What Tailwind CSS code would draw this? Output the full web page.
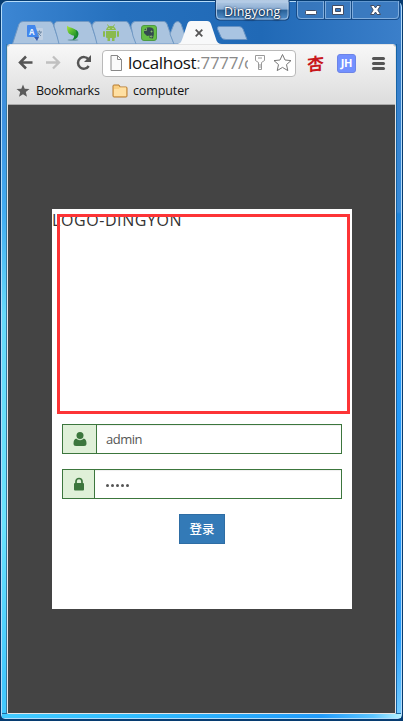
<!DOCTYPE html>
<html lang="zh">
<head>
<meta charset="utf-8">
<title>Login</title>
<script src="https://cdn.jsdelivr.net/npm/@tailwindcss/browser@4"></script>
</head>
<body class="h-[721px] w-[403px] overflow-hidden bg-[#063b70] font-['Open_Sans','Noto_Sans_CJK_SC',sans-serif]">
<div class="flex h-[719px] w-full px-px pt-px">
<div class="relative flex w-full flex-col rounded-t-md rounded-b border border-[#b5dcfa] bg-[linear-gradient(90deg,#3c86d3_0%,#2570bd_30%,#2069b6_65%,#3b7fca_100%)]">
  <div class="absolute top-[42px] bottom-0 left-0 w-[5px] bg-[linear-gradient(180deg,#3c85d3_0px,#3e93e1_80px,#42adf2_170px,#65dafa_270px,#69e3fc_480px,#42c8fc_640px)] border-r border-[#367ba5]"></div>
  <div class="absolute top-[42px] right-0 bottom-0 w-[5px] border-l border-[#1564a7] bg-[linear-gradient(180deg,#377cc7_0px,#378bd9_168px,#1e83d9_170px,#259bfa_260px,#2499fb_500px,#3097ef_540px,#229cff_590px,#78ceff_674px)]"></div>
  <div class="absolute right-0 bottom-0 left-0 h-[5px] border-t border-[#21699e] bg-[linear-gradient(90deg,#43cbff,#32bfff_30%,#229cfb_80%,#5cc5ff_93%,#b7f3ff)]"></div>

  <header class="relative h-[42px] shrink-0">
    <svg class="absolute -left-[2px] -top-[2px]" width="403" height="44" viewBox="0 0 403 44">
      <defs>
        <linearGradient id="cap" x2="0" y2="1"><stop offset="0" stop-color="#b6cce4"/><stop offset=".46" stop-color="#8caed4"/><stop offset=".5" stop-color="#286097"/><stop offset="1" stop-color="#5693cf"/></linearGradient>
        <linearGradient id="leaf" x2="1" y2="1"><stop stop-color="#b2e43d"/><stop offset=".5" stop-color="#53b92f"/><stop offset="1" stop-color="#16892b"/></linearGradient>
      </defs>
      <g fill="#abc4df" stroke="#7199c4">
        <path d="M12.500 44 L19 24Q20 21.500 23 21.500H50Q52 21.500 53 24L60 44Z"/>
        <path d="M57 36 54 26Q54 21.500 58 21.500H88Q90 21.500 91 24L98 44H59Z"/>
        <path d="M95 36 92 26Q93 21.500 96 21.500H126Q128 21.500 129 24L137 44H97Z"/>
        <path d="M133 36 131 26Q132 21.500 135 21.500H164Q166 21.500 167 24L174 44H136Z"/>
        <path d="M170 34 174 24Q175 21.500 178 21.500 180 22 181 24L188 44H174Z"/>
      </g>
      <path d="M176 44C181 44 181 42 183 37L187 25Q188 21 191 21H207Q210 21 211 24L216 39Q217 44 222 44Z" fill="#f8f9fa"/>
      <path d="M219 26.500H239Q242 26.500 243 29L247 39.500H226Q222 39.500 221 37L217.500 29Q217 26.500 219 26.500Z" fill="#a9c4e2" stroke="#6591c3"/>
      <path d="m195.700 29.700 6.600 6.600m0-6.600-6.600 6.600" stroke="#555" stroke-width="1.800"/>
      <rect x="34" y="28" width="9" height="12" rx="1" fill="#c0d0e3"/>
      <path d="M28 25h7l4 12H28q-1 0-1-1V26q0-1 1-1z" fill="#4287ed"/><path d="m34 37 5 0-2 4z" fill="#3b5eb0"/>
      <path d="M37 32h5m-2.500-1.500v1.500m1.500 0q-1 3-4 4m1-3 3 3" fill="none" stroke="#708aa6"/>
      <text x="29" y="35" font-size="8" font-weight="700" fill="#e9f2ff" font-family="Open Sans">A</text>
      <ellipse cx="73" cy="40" rx="5.500" ry=".8" fill="#6c95a3"/>
      <path d="M72 30C76 28 80 32 78 36Q77 39 72.500 40 75 37 74 34Z" fill="#16862d"/><path d="M67 25.500C69 28 72 27 75 29.500 77.500 32 75 34 78 36 73 36 69 34.500 68 32 67 30 67 28 67 25.500Z" fill="url(#leaf)"/>
      <g fill="#8aba4e"><path d="M106 30q1-4 5-4t5 4zM106 31h10v6q0 1-1 1h-8q-1 0-1-1z"/><rect x="103" y="31" width="2" height="6" rx="1"/><rect x="117" y="31" width="2" height="6" rx="1"/><path d="M107.500 37h2.500v4h-2.500zM112 37h2.500v4H112z"/><path d="m107.500 24.500 1.500 2.500m5.500-2.500-1.500 2.500" stroke="#8aba4e"/></g><circle cx="109" cy="28.500" r=".6" fill="#dce9d0"/><circle cx="113" cy="28.500" r=".6" fill="#dce9d0"/>
      <rect x="141.500" y="25.500" width="15" height="15" rx="2.500" fill="#64bd45" stroke="#4d9b43"/>
      <path d="M144 30 147 27.500Q152 26.500 153.500 29 154.500 34 153 38.500L149.500 38V35.500L147 36 144 33Z" fill="#354b4f"/><path d="M150.500 36h1.500v1h-1.500zM151 31h1v1h-1zM146.500 28v2.500H144" fill="none" stroke="#9ad174" stroke-width=".7"/>
      <path d="M215.500 0V16Q215.500 20 219 20H286Q289 20 289 16V0" fill="url(#cap)" stroke="#173f71"/><path d="M216.500 2V15Q216.500 19 220 19H285Q288 19 288 15V2Z" fill="none" stroke="#bbd3ed" stroke-opacity=".8"/>
      <g fill="#3d7bbe" fill-opacity=".7"><path d="M296.500 1V15Q296.500 19.500 300 19.500H396Q399.500 19.500 399.500 15V1" stroke="#164b88"/><path d="M297.500 1V15Q297.500 18.500 301 18.500H323.500V1M325.500 1V18.500H350.500V1M352.500 1V18.500H395Q398.500 18.500 398.500 15V1" fill="none" stroke="#80addd"/><path d="M324.500 1V19M351.500 1V19" stroke="#174c85"/></g>
      <rect x="305.500" y="10.500" width="11" height="4" rx="1" fill="#fff" stroke="#424d65"/>
      <path d="M332.500 5.500h11v9h-11zM335.500 8.500v3h5v-3z" fill="#fff" stroke="#424d65" fill-rule="evenodd"/>
      <path d="M370.500 5.500H374L375.500 8 377 5.500H380.500L377.800 10 380.500 14.500H377L375.500 12 374 14.500H370.500L373.200 10Z" fill="#fff" stroke="#424d65"/>
    </svg>
    <div class="absolute top-0 left-[222px] text-[12.5px] leading-[19px] font-medium tracking-[.2px] text-white [text-shadow:0_0_2px_#102847,0_1px_2px_#102847] whitespace-nowrap">Dingyong</div>
  </header>

  <main class="relative mx-[5px] flex h-[670px] shrink-0 flex-col overflow-hidden rounded-t-[3px] border border-[#e4e4e4] bg-[#444]">
    <nav class="-mx-px -mt-px h-[61px] shrink-0 border-b border-[#aaa] bg-[linear-gradient(#f8f8f8,#dedede_56px)]">
      <div class="flex h-[38px] items-center pl-[11px]">
        <svg class="shrink-0" width="76" height="20" viewBox="0 0 76 20" fill="none"><path d="M14.500 9.500H2m6-6-6 6 6 6" stroke="#555" stroke-width="2.500"/><path d="M28 9.500h13m-6-6 6 6-6 6" stroke="#c0c0c0" stroke-width="2.300"/><path d="M70.500 6.500A5.800 5.800 0 1 0 70.700 13" stroke="#555" stroke-width="2.500"/><path d="M73 2V9H66Z" fill="#555"/></svg>
        <div class="ml-[8px] flex h-[27px] w-[194px] shrink-0 items-center rounded-sm border border-[#b9b9b9] bg-white pl-[7px]">
          <svg class="shrink-0" width="12" height="16" viewBox="0 0 12 16"><path d="M1 .5h6.500l4 4v11H1zM7.500 .5v4h4" fill="#fafafa" stroke="#888"/></svg>
          <div class="ml-[6px] w-[120px] shrink-0 overflow-hidden text-[17px] leading-6 tracking-[-.32px] whitespace-nowrap text-[#8a8a8a]"><span class="text-[#111]">localhost</span>:7777/c</div>
          <svg class="ml-[5px] shrink-0" width="40" height="20" viewBox="0 0 40 20" fill="#fff" stroke="#9a9a9a"><path d="M2.500 2.500h9v5l-3 2v7h-3v-7l-3-2zM5 5h4M6 12h2m-2 2h2"/><path d="m29.500 1.500 2.500 5.500 6 .6-4.500 4 1.300 6-5.300-3.200-5.300 3.200 1.300-6-4.500-4 6-.6z" stroke="#777"/></svg>
        </div>
        <div class="ml-[11px] w-[17px] shrink-0 -skew-y-6 font-['Noto_Sans_CJK_SC',sans-serif] text-[17px] leading-5 font-bold text-[#c8171c]">杏</div>
        <div class="ml-[13px] flex h-[19px] w-[19px] items-center justify-center rounded-[3px] border border-[#6c84e7] bg-[#7290ff] text-[11px] font-bold tracking-tight text-white">JH</div>
        <div class="ml-[16px] flex flex-col gap-[2px]"><i class="h-[3px] w-[13px] rounded-sm bg-[#555]"></i><i class="h-[3px] w-[13px] rounded-sm bg-[#555]"></i><i class="h-[3px] w-[13px] rounded-sm bg-[#555]"></i></div>
      </div>
      <div class="flex h-[18px] items-center pl-[9px] text-[12.5px] text-[#111]">
        <svg width="14" height="14" viewBox="0 0 14 14" fill="#5b5b5b"><path d="m7 .5 1.700 4.300 4.800.3-3.700 3 1.200 4.700L7 10.200 3 12.800l1.200-4.700-3.700-3 4.800-.3z"/></svg>
        <span class="ml-[6px] w-[64px] tracking-[-.25px]">Bookmarks</span>
        <svg class="ml-[12px]" width="16" height="14" viewBox="0 0 16 14"><path d="M1 12V2q0-1 1-1h5l1 2h6q1 0 1 1v8q0 1-1 1H2q-1 0-1-1z" fill="#f9ce81" stroke="#b77b2e"/><path d="M2 5h5l1-1.500h6V12H2z" fill="#ffe0a2"/></svg>
        <span class="ml-[5px] tracking-[-.12px]">computer</span>
      </div>
    </nav>

    <section class="relative mt-[104px] ml-[44px] flex h-[400px] w-[300px] shrink-0 flex-col bg-white">
      <div class="h-[215px] text-[16px] leading-[22px] tracking-[.58px] text-[#333]">LOGO-DINGYON</div>
      <div class="absolute top-[5px] left-[5px] h-[200px] w-[293px] border-3 border-[#fd3436]"></div>
      <form class="flex flex-col px-[10px]">
        <div class="flex h-[30px] border border-[#3c763d] text-[13px] text-[#555]">
          <div class="flex w-[34px] items-center justify-center border-r border-[#3c763d] bg-[#dff0d8]"><svg width="14" height="14" viewBox="0 0 14 14" fill="#3c763d"><ellipse cx="7" cy="3.500" rx="3.500" ry="3.500"/><path d="M3.500 6.500Q.5 7 .5 11.500.5 14 3 14h8q2.500 0 2.500-2.500 0-4.500-3-5Q7 9 3.500 6.500Z"/><path d="M3.300 6.200Q7 9.400 10.700 6.200" fill="none" stroke="#dff0d8" stroke-width=".8"/></svg></div>
          <div class="flex flex-1 items-center pt-px pl-[9px] shadow-[inset_0_1px_1px_#0001]"><span class="tracking-[-.5px]">admin</span></div>
        </div>
        <div class="mt-[15px] flex h-[30px] border border-[#3c763d]">
          <div class="flex w-[32px] items-center justify-center border-r border-[#3c763d] bg-[#dff0d8]"><svg width="12" height="14" viewBox="0 0 12 14" fill="#3c763d"><rect x="1" y="6" width="10" height="7.500" rx="1"/><path d="M3 7V4.500a3 3 0 0 1 6 0V7" fill="none" stroke="#3c763d" stroke-width="1.700"/></svg></div>
          <div class="flex flex-1 items-center gap-[1.500px] pl-[10.500px] pt-[3px] shadow-[inset_0_1px_1px_#0001]"><i class="size-[3.600px] rounded-full bg-[#555]"></i><i class="size-[3.600px] rounded-full bg-[#555]"></i><i class="size-[3.600px] rounded-full bg-[#555]"></i><i class="size-[3.600px] rounded-full bg-[#555]"></i><i class="size-[3.600px] rounded-full bg-[#555]"></i></div>
        </div>
        <button type="button" class="mt-[15px] ml-[117px] h-[30px] w-[46px] border border-[#2e6da4] bg-[#337ab7] font-['Noto_Sans_CJK_SC',sans-serif] text-[12.5px] font-medium text-white">登录</button>
      </form>
    </section>
  </main>
</div>
</div>
</body>
</html>
